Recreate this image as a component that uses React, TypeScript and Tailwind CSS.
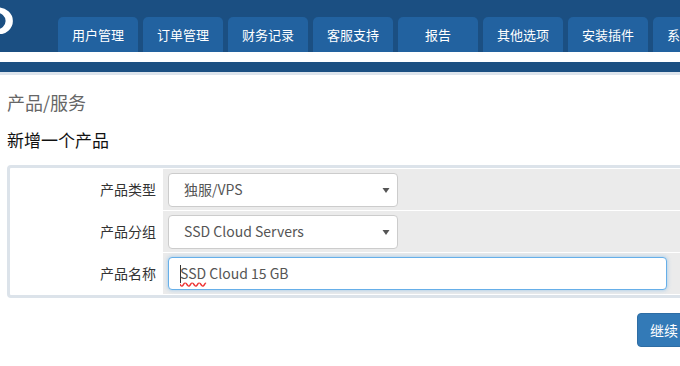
const tabs = ["用户管理", "订单管理", "财务记录", "客服支持", "报告", "其他选项", "安装插件", "系统设置"]

function Caret() {
  return (
    <svg width="10" height="10" viewBox="0 0 10 10" className="shrink-0">
      <path d="M1.5 3 L8.5 3 L5 8 Z" fill="#555" />
    </svg>
  )
}

function SelectBox({ value }: { value: string }) {
  return (
    <div className="w-[230px] h-[34px] bg-white border border-[#ccc] rounded-[4px] flex items-center justify-between pl-[15px] pr-[6px] text-[14px] text-[#555]">
      <span>{value}</span>
      <Caret />
    </div>
  )
}

function FormRow({ label, children, h }: { label: string; children: React.ReactNode; h: string }) {
  return (
    <div className={`flex ${h}`}>
      <div
        className="w-[152px] shrink-0 flex items-center justify-end pr-[7px] text-[14px] text-[#333] bg-white"
        style={{ fontFamily: '"Noto Sans CJK SC", sans-serif' }}
      >
        {label}
      </div>
      <div className="flex-1 bg-[#ebebeb] flex items-center pl-[5px]">{children}</div>
    </div>
  )
}

export default function App() {
  return (
    <div
      className="w-[680px] h-[366px] overflow-hidden bg-white"
      style={{ fontFamily: '"Open Sans", "Noto Sans CJK SC", sans-serif' }}
    >
      {/* header */}
      <div className="h-[52px] bg-[#1b4f82] flex items-end relative">
        <svg width="20" height="28" viewBox="0 0 20 28" className="absolute left-0 top-[6px]">
          <path d="M-4 4 A11 10 0 0 1 -4 26 M-4 4 L-2 4 A9 8 0 0 1 -2 26" fill="none" stroke="#fff" strokeWidth="5" />
        </svg>
        <div className="flex gap-[5px] pl-[58px]">
          {tabs.map((t) => (
            <div
              key={t}
              className="w-[80px] h-[35px] shrink-0 bg-[#2262a0] rounded-t-[5px] flex items-center justify-center text-white text-[13px]"
              style={{ fontFamily: '"Noto Sans CJK SC", sans-serif' }}
            >
              {t}
            </div>
          ))}
        </div>
      </div>
      <div className="h-[10px] bg-white" />
      <div className="h-[10px] bg-[#1b4f82]" />
      <div className="h-[3px] bg-[#dde4ec]" />

      <div className="pl-[7px] pt-[14px]" style={{ fontFamily: '"Noto Sans CJK SC", sans-serif' }}>
        <div className="text-[18px] leading-[26px] text-[#666]">产品/服务</div>
        <div className="mt-[13px] text-[17px] leading-[24px] text-[#111]">新增一个产品</div>

        <div className="mt-[13px] border-[3px] border-[#dce3ea] rounded-[4px] p-[1px] w-[700px] flex flex-col gap-[1px]">
          <FormRow label="产品类型" h="h-[41px]">
            <SelectBox value="独服/VPS" />
          </FormRow>
          <FormRow label="产品分组" h="h-[41px]">
            <SelectBox value="SSD Cloud Servers" />
          </FormRow>
          <FormRow label="产品名称" h="h-[41px]">
            <div className="w-[499px] h-[33px] bg-white border border-[#66afe9] rounded-[4px] shadow-[0_0_4px_rgba(102,175,233,0.6)] flex items-center pl-[11px] text-[14px] text-[#555]">
              <span className="w-px h-[18px] bg-[#333] -mr-px" />
              <span className="underline decoration-wavy decoration-[#e33] underline-offset-[3px]">SSD</span>
              <span>&nbsp;Cloud 15 GB</span>
            </div>
          </FormRow>
        </div>

        <div className="flex justify-end mt-[15px]">
          <div className="w-[60px] h-[34px] -mr-[17px] bg-[#337ab7] border border-[#2e6da4] rounded-[4px] flex items-center pl-[12px] text-white text-[14px]">
            继续
          </div>
        </div>
      </div>
    </div>
  )
}
